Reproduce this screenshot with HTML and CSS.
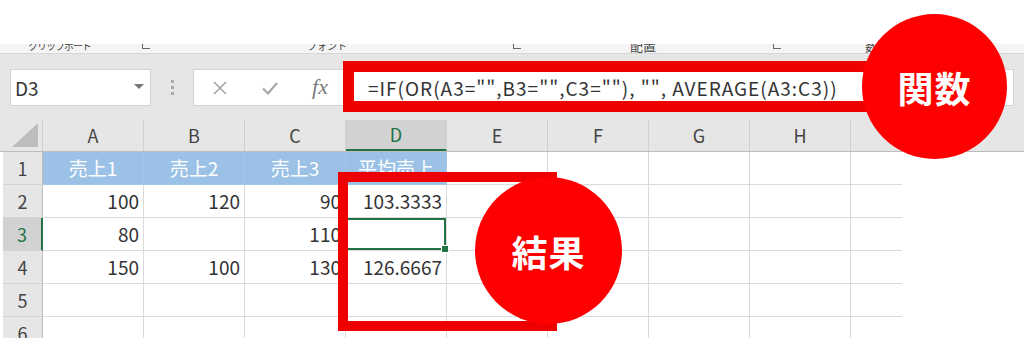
FILE: index.html
```html
<!DOCTYPE html>
<html lang="ja">
<head>
    <meta charset="UTF-8">
    <title>IF関数とAVERAGE</title>
    <link rel="stylesheet" href="styles.css">
</head>
<body>
    <div class="top-space"></div>

    <!-- リボンのグループ名（上が切れている） -->
    <div class="ribbon">
        <div class="group grp-clip"><span class="label">クリップボード</span><span class="launch"></span></div>
        <div class="group grp-font"><span class="label">フォント</span><span class="launch"></span></div>
        <div class="group grp-align"><span class="label">配置</span><span class="launch"></span></div>
        <div class="group grp-num"><span class="label">数値</span></div>
    </div>

    <div class="formula-bar">
        <div class="name-box">
            <span>D3</span>
            <span class="drop"></span>
        </div>
        <div class="grip"><i></i><i></i><i></i></div>
        <div class="fx-box">
            <span class="fx-icon">
                <svg width="16" height="16" viewBox="0 0 16 16"><path d="M2 2 L14 14 M14 2 L2 14" stroke="#a6a6a6" stroke-width="1.6" fill="none"/></svg>
            </span>
            <span class="fx-icon">
                <svg width="18" height="16" viewBox="0 0 18 16"><path d="M2 8.5 L7 13.5 L16 3" stroke="#a6a6a6" stroke-width="2.2" fill="none"/></svg>
            </span>
            <span class="fx-icon fx-text">fx</span>
            <span class="formula">=IF(OR(A3="",B3="",C3=""), "", AVERAGE(A3:C3))</span>
        </div>
    </div>

    <div class="sheet">
        <div class="row head-row">
            <div class="corner"><span class="tri"></span></div>
            <div class="col-head">A</div>
            <div class="col-head">B</div>
            <div class="col-head">C</div>
            <div class="col-head active">D</div>
            <div class="col-head">E</div>
            <div class="col-head">F</div>
            <div class="col-head">G</div>
            <div class="col-head">H</div>
            <div class="col-head"></div>
            <div></div>
        </div>
        <div class="row">
            <div class="row-head">1</div>
            <div class="cell title">売上1</div>
            <div class="cell title">売上2</div>
            <div class="cell title">売上3</div>
            <div class="cell title">平均売上</div>
            <div class="cell"></div><div class="cell"></div><div class="cell"></div><div class="cell"></div><div class="cell last"></div>
            <div></div>
        </div>
        <div class="row">
            <div class="row-head">2</div>
            <div class="cell num">100</div>
            <div class="cell num">120</div>
            <div class="cell num">90</div>
            <div class="cell num">103.3333</div>
            <div class="cell"></div><div class="cell"></div><div class="cell"></div><div class="cell"></div><div class="cell last"></div>
            <div></div>
        </div>
        <div class="row">
            <div class="row-head active">3</div>
            <div class="cell num">80</div>
            <div class="cell num"></div>
            <div class="cell num">110</div>
            <div class="cell num selected"><span class="handle"></span></div>
            <div class="cell"></div><div class="cell"></div><div class="cell"></div><div class="cell"></div><div class="cell last"></div>
            <div></div>
        </div>
        <div class="row">
            <div class="row-head">4</div>
            <div class="cell num">150</div>
            <div class="cell num">100</div>
            <div class="cell num">130</div>
            <div class="cell num">126.6667</div>
            <div class="cell"></div><div class="cell"></div><div class="cell"></div><div class="cell"></div><div class="cell last"></div>
            <div></div>
        </div>
        <div class="row">
            <div class="row-head">5</div>
            <div class="cell"></div><div class="cell"></div><div class="cell"></div><div class="cell"></div>
            <div class="cell"></div><div class="cell"></div><div class="cell"></div><div class="cell"></div><div class="cell last"></div>
            <div></div>
        </div>
        <div class="row">
            <div class="row-head">6</div>
            <div class="cell"></div><div class="cell"></div><div class="cell"></div><div class="cell"></div>
            <div class="cell"></div><div class="cell"></div><div class="cell"></div><div class="cell"></div><div class="cell last"></div>
            <div></div>
        </div>
    </div>

    <!-- 注釈（赤枠と丸） -->
    <div class="mark frame-formula"></div>
    <div class="mark frame-result"></div>
    <div class="mark badge badge-func">関数</div>
    <div class="mark badge badge-result">結果</div>
</body>
</html>
```

FILE: styles.css
```css
body {
    margin: 0;
    width: 1024px;
    height: 353px;
    overflow: hidden;
    position: relative;
    background-color: #fff;
    font-family: "Noto Sans CJK JP", "Noto Sans", sans-serif;
    color: #333;
}

.top-space {
    height: 44px;
}

/* リボン下端 */
.ribbon {
    height: 9px;
    background-color: #f4f4f4;
    border-bottom: 1px solid #d8d8d8;
    overflow: hidden;
    display: flex;
    font-size: 10px;
    color: #444;
}

.ribbon .group {
    position: relative;
    height: 9px;
    flex: none;
}

.ribbon .label {
    position: absolute;
    bottom: 2px;
    line-height: 10px;
    white-space: nowrap;
}

.ribbon .launch {
    position: absolute;
    bottom: 4px;
    width: 7px;
    height: 5px;
    border-left: 1px solid #666;
    border-bottom: 1px solid #666;
}

.grp-clip { width: 160px; }
.grp-clip .label { left: 28px; letter-spacing: -1px; }
.grp-clip .launch { left: 142px; }

.grp-font { width: 365px; }
.grp-font .label { left: 147px; }
.grp-font .launch { left: 353px; }

.grp-align { width: 260px; }
.grp-align .label { left: 105px; font-size: 13px; }
.grp-align .launch { left: 248px; }

.grp-num { width: 100px; }
.grp-num .label { left: 80px; font-size: 13px; }

/* 数式バー */
.formula-bar {
    height: 66px;
    background-color: #e6e6e6;
    display: flex;
    align-items: flex-start;
    padding: 15px 0 0 10px;
    box-sizing: border-box;
}

.name-box {
    width: 141px;
    height: 37px;
    box-sizing: border-box;
    background-color: #fff;
    border: 1px solid #d4d4d4;
    display: flex;
    align-items: center;
    justify-content: space-between;
    padding: 0 6px 0 4px;
    font-size: 19px;
    color: #333;
}

.name-box .drop {
    width: 0;
    height: 0;
    border-left: 5px solid transparent;
    border-right: 5px solid transparent;
    border-top: 5px solid #777;
    margin-top: -3px;
}

.grip {
    width: 42px;
    height: 37px;
    display: flex;
    flex-direction: column;
    align-items: center;
    justify-content: center;
    gap: 3px;
}

.grip i {
    width: 3px;
    height: 3px;
    background-color: #aaa;
}

.fx-box {
    flex: 1;
    height: 37px;
    margin-right: 10px;
    box-sizing: border-box;
    background-color: #fff;
    border: 1px solid #d4d4d4;
    display: flex;
    align-items: center;
    padding-left: 1px;
}

.fx-icon {
    width: 50px;
    display: flex;
    justify-content: center;
}

.fx-text {
    font-family: "Liberation Serif", serif;
    font-style: italic;
    font-size: 22px;
    color: #7a7a7a;
    margin-top: -2px;
}

.formula {
    margin-left: 23px;
    font-size: 19px;
    letter-spacing: 1px;
    color: #333;
    white-space: nowrap;
}

/* シート */
.sheet {
    height: 218px;
    overflow: hidden;
}

.row {
    display: grid;
    grid-template-columns: 40px repeat(8, 101px) 51px 1fr;
    height: 33px;
    margin-left: 3px;
}

.head-row {
    height: 32px;
    background-color: #e6e6e6;
    margin-left: 0;
    padding-left: 3px;
    border-bottom: 1px solid #bdbdbd;
    box-sizing: border-box;
}

.corner {
    position: relative;
    border-right: 1px solid #cfcfcf;
}

.corner .tri {
    position: absolute;
    right: 4px;
    bottom: 4px;
    width: 0;
    height: 0;
    border-left: 26px solid transparent;
    border-bottom: 24px solid #bdbdbd;
}

.col-head {
    border-right: 1px solid #d0d0d0;
    font-size: 18px;
    color: #444;
    text-align: center;
    line-height: 31px;
}

.col-head.active {
    background-color: #d2d2d2;
    color: #217346;
    border-bottom: 2px solid #217346;
    line-height: 29px;
}

.row-head {
    background-color: #e6e6e6;
    border-right: 1px solid #bdbdbd;
    border-bottom: 1px solid #d4d4d4;
    text-align: center;
    font-size: 18px;
    color: #444;
    line-height: 32px;
}

.row-head.active {
    background-color: #d2d2d2;
    color: #217346;
    border-right: 2px solid #217346;
}

.cell {
    border-right: 1px solid #dadada;
    border-bottom: 1px solid #dadada;
    font-size: 19px;
    line-height: 32px;
    white-space: nowrap;
}

.cell.last {
    border-right: none;
}

.cell.title {
    background-color: #9bc2e6;
    border-color: #a4c7e8;
    color: #fff;
    text-align: center;
}

.cell.num {
    text-align: right;
    padding-right: 4px;
}

.cell.selected {
    position: relative;
    box-shadow: inset 0 0 0 2px #217346;
}

.handle {
    position: absolute;
    right: -3px;
    bottom: -3px;
    width: 6px;
    height: 6px;
    background-color: #217346;
    border: 1px solid #fff;
}

/* 注釈 */
.mark {
    position: absolute;
    box-sizing: border-box;
}

.frame-formula {
    left: 343px;
    top: 61px;
    width: 532px;
    height: 51px;
    border: 11px solid #ee0000;
}

.frame-result {
    left: 338px;
    top: 172px;
    width: 219px;
    height: 159px;
    border: 10px solid #ee0000;
}

.badge {
    border-radius: 50%;
    background-color: #fe0000;
    color: #fff;
    font-size: 36px;
    font-weight: 700;
    display: flex;
    align-items: center;
    justify-content: center;
    letter-spacing: 1px;
}

.badge-func {
    left: 862px;
    top: 14px;
    width: 145px;
    height: 145px;
}

.badge-result {
    left: 475px;
    top: 177px;
    width: 147px;
    height: 147px;
}
```
